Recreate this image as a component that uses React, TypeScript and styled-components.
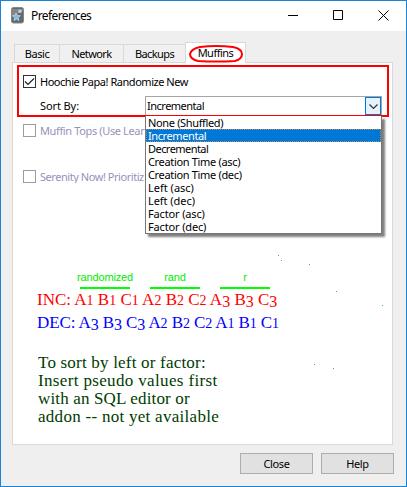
import React from 'react';
import styled, { createGlobalStyle } from 'styled-components';

const GlobalStyle = createGlobalStyle`
  * { box-sizing: border-box; }
  body { margin: 0; overflow: hidden; }
`;

const Window = styled.div`
  width: 407px;
  height: 487px;
  border: 1px solid #1883d7;
  background: #efefef;
  color: #000;
  font: 11px/13px 'Noto Sans', sans-serif;
  white-space: nowrap;
  display: flex;
  flex-direction: column;
`;

const TitleBar = styled.header`
  height: 30px;
  flex: none;
  background: #fff;
  display: flex;
  align-items: center;
  padding: 0 17px 2px 10px;
`;

const Title = styled.h1`
  margin: 0 auto 0 7px;
  font: 12px/16px 'Noto Sans', sans-serif;
  letter-spacing: -0.6px;
  padding-top: 1px;
`;

const WindowControls = styled.div`
  display: flex;
  gap: 35px;
  align-items: center;
`;

const Tabs = styled.nav`
  display: flex;
  align-items: flex-end;
  height: 31px;
  flex: none;
  padding-left: 13px;
`;

const Tab = styled.div<{ $width: number; $active?: boolean; $spacing: number }>`
  position: relative;
  z-index: ${p => (p.$active ? 1 : 0)};
  width: ${p => p.$width}px;
  height: ${p => (p.$active ? 21 : 18)}px;
  margin-bottom: ${p => (p.$active ? -1 : 0)}px;
  border: 1px solid #d9d9d9;
  border-bottom: 0;
  border-right-width: ${p => (p.$active ? 1 : 0)}px;
  background: ${p => (p.$active ? '#fff' : '#f0f0f0')};
  letter-spacing: ${p => p.$spacing}px;
  text-align: center;
  line-height: ${p => (p.$active ? 19 : 17)}px;
`;

const TabRing = styled.svg`
  position: absolute;
  left: 3px;
  top: 2px;
`;

const Panel = styled.main`
  position: relative;
  width: 381px;
  height: 383px;
  flex: none;
  margin-left: 11px;
  border: 1px solid #d9d9d9;
  background: #fff;
`;

const Highlight = styled.section`
  width: 372px;
  height: 52px;
  margin: 2px 0 0 4px;
  border: 2px solid #f00;
  padding: 8px 0 0 4px;
`;

const CheckRow = styled.label<{ $faded?: boolean; $spacing: number }>`
  display: flex;
  align-items: center;
  gap: 4px;
  height: 13px;
  letter-spacing: ${p => p.$spacing}px;
  color: ${p => (p.$faded ? '#9a90bb' : '#000')};
`;

const Box = styled.span<{ $faded?: boolean }>`
  width: 13px;
  height: 13px;
  flex: none;
  border: 1px solid ${p => (p.$faded ? '#9c9c9c' : '#333')};
  display: flex;
  align-items: center;
  justify-content: center;
`;

const SortRow = styled.div`
  display: flex;
  align-items: flex-start;
  margin: 8px 0 0 17px;
`;

const SortLabel = styled.span`
  width: 105px;
  padding-top: 3px;
  letter-spacing: -0.1px;
`;

const Combo = styled.div`
  position: relative;
  z-index: 2;
  width: 237px;
  height: 19px;
  border: 1px solid #a6a6a6;
  border-bottom: 0;
  display: flex;
  justify-content: space-between;
  letter-spacing: -0.5px;
  line-height: 18px;
  padding-left: 1px;
`;

const ComboButton = styled.span`
  width: 16px;
  height: 18px;
  border: 1px solid #0078d7;
  background: #e5f1fb;
  display: flex;
  align-items: center;
  justify-content: center;
  padding-top: 2px;
`;

const DropList = styled.ul`
  position: absolute;
  z-index: 3;
  left: 132px;
  top: 53px;
  width: 237px;
  height: 118px;
  margin: 0;
  padding: 0;
  list-style: none;
  background: #fff;
  border: 1px solid #777;
  border-top: 0;
  box-shadow: 3px 3px 2px rgba(0, 0, 0, 0.5);
`;

const Option = styled.li<{ $selected?: boolean; $spacing: number }>`
  height: 13px;
  line-height: 13px;
  padding-left: 2px;
  letter-spacing: ${p => p.$spacing}px;
  color: ${p => (p.$selected ? '#fff' : '#000')};
  background: ${p => (p.$selected ? '#0078d7' : 'transparent')};
  outline: ${p => (p.$selected ? '1px dotted #b98a5c' : 'none')};
  outline-offset: -1px;
`;

const DisabledOptions = styled.div`
  display: flex;
  flex-direction: column;
  gap: 33px;
  width: 132px;
  overflow: hidden;
  padding-left: 10px;
  margin-top: 7px;
`;

const Groups = styled.div`
  display: flex;
  gap: 20px;
  margin: 87px 0 0 67px;
`;

const Group = styled.div`
  width: 50px;
  height: 19px;
  border-bottom: 2px solid #0f0;
  color: #00ec00;
  font: 11px/15px 'Liberation Sans', sans-serif;
  letter-spacing: -0.15px;
  display: flex;
  justify-content: center;
`;

const Sequences = styled.div`
  margin: -1px 0 0 24px;
`;

const Sequence = styled.div<{ $color: string; $spacing: number }>`
  height: 23px;
  color: ${p => p.$color};
  font: 17px/23px 'Liberation Serif', serif;
  letter-spacing: ${p => p.$spacing}px;
`;

const Figure = styled.span<{ $low: boolean }>`
  font-size: ${p => (p.$low ? 16 : 14)}px;
  line-height: 1;
  vertical-align: ${p => (p.$low ? -2 : 0)}px;
`;

const Note = styled.div`
  margin: 20px 0 0 25px;
  color: #003c00;
  font: 17px/18px 'Liberation Serif', serif;
`;

const NoteLine = styled.div<{ $spacing: number }>`
  letter-spacing: ${p => p.$spacing}px;
`;

const Speck = styled.i<{ $x: number; $y: number }>`
  position: absolute;
  left: ${p => p.$x - 13}px;
  top: ${p => p.$y - 63}px;
  width: 1px;
  height: 1px;
  background: #0e0;
`;

const Footer = styled.footer`
  display: flex;
  justify-content: flex-end;
  gap: 8px;
  padding: 8px 12px 0 0;
`;

const Button = styled.button`
  width: 73px;
  height: 21px;
  padding: 0;
  border: 1px solid #adadad;
  background: #e1e1e1;
  color: #000;
  font: 11px/19px 'Noto Sans', sans-serif;
  letter-spacing: -0.4px;
`;

const options: [string, number][] = [
  ['None (Shuffled)', -0.35],
  ['Incremental', -0.4],
  ['Decremental', -0.55],
  ['Creation Time (asc)', -0.33],
  ['Creation Time (dec)', -0.33],
  ['Left (asc)', 0],
  ['Left (dec)', -0.05],
  ['Factor (asc)', -0.15],
  ['Factor (dec)', -0.15],
];

const specks = [[278, 255], [281, 260], [309, 264], [336, 291], [382, 305], [314, 364], [333, 368]];

function OldStyle({ text }: { text: string }) {
  return (
    <>
      {text.split(/(\d)/).map((part, i) =>
        /\d/.test(part) ? <Figure key={i} $low={part === '3'}>{part}</Figure> : part,
      )}
    </>
  );
}

function AppIcon() {
  return (
    <svg width="13" height="17" viewBox="0 0 13 17">
      <rect x="0.5" y="0.5" width="12" height="15.5" rx="2" fill="#686868" stroke="#858585" />
      <path d="M1 10 L12 3 V2 H1Z" fill="#858585" />
      <path d="M5 6l1.300 2.500 3 .2-2.100 2 .7 2.800L5.400 12.100 3 13.500l.5-2.800L1.500 8.700l2.600-.2z" fill="#6dbff5" stroke="#dceefa" strokeWidth=".6" />
      <path d="M9 2l.8 1.300 1.700.2-1.200 1.200.2 1.600L9 5.500l-1.500.8.3-1.600-1.200-1.200 1.700-.2z" fill="#b9dff5" />
    </svg>
  );
}

export default function App() {
  return (
    <>
      <GlobalStyle />
      <Window>
        <TitleBar>
          <AppIcon />
          <Title>Preferences</Title>
          <WindowControls>
            <svg width="10" height="10"><path d="M0 5.500H10" stroke="#000" /></svg>
            <svg width="10" height="10"><path d="M.5 .5H9.500V9.500H.5Z" fill="none" stroke="#000" /></svg>
            <svg width="11" height="11"><path d="M.5 .5L10.500 10.500M10.500 .5L.5 10.500" stroke="#000" /></svg>
          </WindowControls>
        </TitleBar>
        <Tabs>
          <Tab $width={45} $spacing={-0.4}>Basic</Tab>
          <Tab $width={64} $spacing={-0.6}>Network</Tab>
          <Tab $width={62} $spacing={-0.6}>Backups</Tab>
          <Tab $width={61} $active $spacing={-0.5}>
            Muffins
            <TabRing width="55" height="18">
              <path d="M11 2Q27 0 44 2Q53 4 53 9Q53 14 46 16Q28 17 9 16Q1 14 1 9Q2 4 11 2Z" fill="none" stroke="#f00" strokeWidth="2" />
            </TabRing>
          </Tab>
        </Tabs>
        <Panel>
          <Highlight>
            <CheckRow $spacing={-0.47}>
              <Box>
                <svg width="11" height="11"><path d="M1 5.500L4 8.500L10 2.500" fill="none" stroke="#222" strokeWidth="1.2" /></svg>
              </Box>
              Hoochie Papa! Randomize New
            </CheckRow>
            <SortRow>
              <SortLabel>Sort By:</SortLabel>
              <Combo>
                Incremental
                <ComboButton>
                  <svg width="9" height="6"><path d="M.5 .5L4.500 4.500L8.500 .5" fill="none" stroke="#333" strokeWidth="1.2" /></svg>
                </ComboButton>
              </Combo>
            </SortRow>
          </Highlight>
          <DropList>
            {options.map(([label, spacing]) => (
              <Option key={label} $spacing={spacing} $selected={label === 'Incremental'}>{label}</Option>
            ))}
          </DropList>
          <DisabledOptions>
            <CheckRow $faded $spacing={-0.37}><Box $faded />Muffin Tops (Use Lear</CheckRow>
            <CheckRow $faded $spacing={-0.45}><Box $faded />Serenity Now! Prioritiz</CheckRow>
          </DisabledOptions>
          <Groups>
            <Group>randomized</Group>
            <Group>rand</Group>
            <Group>r</Group>
          </Groups>
          <Sequences>
            <Sequence $color="#f00" $spacing={0}><OldStyle text="INC: A1 B1 C1 A2 B2 C2 A3 B3 C3" /></Sequence>
            <Sequence $color="#00f" $spacing={-0.1}><OldStyle text="DEC: A3 B3 C3 A2 B2 C2 A1 B1 C1" /></Sequence>
          </Sequences>
          <Note>
            <NoteLine $spacing={0.2}>To sort by left or factor:</NoteLine>
            <NoteLine $spacing={0.35}>Insert pseudo values first</NoteLine>
            <NoteLine $spacing={0.15}>with an SQL editor or</NoteLine>
            <NoteLine $spacing={0.28}>addon -- not yet available</NoteLine>
          </Note>
          {specks.map(([x, y]) => <Speck key={x} $x={x} $y={y} />)}
        </Panel>
        <Footer>
          <Button>Close</Button>
          <Button>Help</Button>
        </Footer>
      </Window>
    </>
  );
}
